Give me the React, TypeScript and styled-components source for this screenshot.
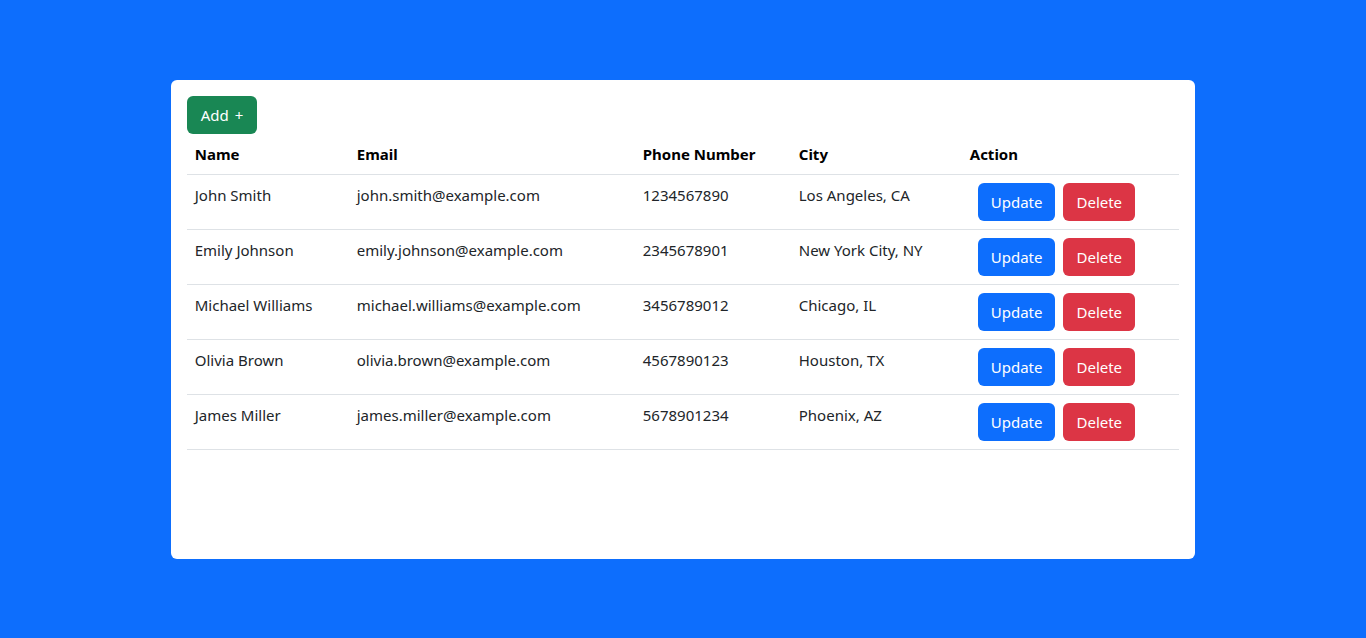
import React from "react";
import styled, { createGlobalStyle } from "styled-components";

const Global = createGlobalStyle`
  html, body { margin: 0; padding: 0; }
  body {
    font-family: "Noto Sans", "Open Sans", sans-serif;
    font-size: 15px;
    line-height: 24px;
    color: #212529;
  }
  * { box-sizing: border-box; }
`;

const Page = styled.div`
  display: flex;
  height: 100vh;
  background: #0d6efd;
  justify-content: center;
  align-items: center;
`;

const Card = styled.div`
  width: 75%;
  height: 479px;
  background: #fff;
  border-radius: 6px;
  padding: 16px;
`;

const Btn = styled.button<{ $variant: "success" | "primary" | "danger"; $ms?: boolean }>`
  font-family: inherit;
  font-size: 15px;
  line-height: 24px;
  padding: 6px 12px;
  border: 1px solid transparent;
  border-radius: 6px;
  color: #fff;
  cursor: pointer;
  margin-left: ${(p) => (p.$ms ? "8px" : "0")};
  background: ${(p) =>
    p.$variant === "success" ? "#198754" : p.$variant === "primary" ? "#0d6efd" : "#dc3545"};
`;

const AddBtn = styled(Btn)`
  padding: 6px 13px;
  word-spacing: 2px;
`;

const Table = styled.table`
  width: 100%;
  border-collapse: collapse;
  table-layout: fixed;
  vertical-align: top;
`;

const Th = styled.th<{ $w?: number }>`
  text-align: left;
  font-weight: 700;
  padding: 8px;
  border-bottom: 1px solid #dee2e6;
  width: ${(p) => (p.$w ? `${p.$w}px` : "auto")};
  color: #000;
`;

const Td = styled.td`
  padding: 8px;
  border-bottom: 1px solid #dee2e6;
  vertical-align: top;
`;

const users = [
  { name: "John Smith", email: "john.smith@example.com", phone: "1234567890", city: "Los Angeles, CA" },
  { name: "Emily Johnson", email: "emily.johnson@example.com", phone: "2345678901", city: "New York City, NY" },
  { name: "Michael Williams", email: "michael.williams@example.com", phone: "3456789012", city: "Chicago, IL" },
  { name: "Olivia Brown", email: "olivia.brown@example.com", phone: "4567890123", city: "Houston, TX" },
  { name: "James Miller", email: "james.miller@example.com", phone: "5678901234", city: "Phoenix, AZ" },
];

export default function App() {
  return (
    <>
      <Global />
      <Page>
        <Card>
          <AddBtn $variant="success">Add +</AddBtn>
          <Table>
            <thead>
              <tr>
                <Th $w={162}>Name</Th>
                <Th $w={286}>Email</Th>
                <Th $w={156}>Phone Number</Th>
                <Th $w={171}>City</Th>
                <Th>Action</Th>
              </tr>
            </thead>
            <tbody>
              {users.map((u) => (
                <tr key={u.email}>
                  <Td>{u.name}</Td>
                  <Td>{u.email}</Td>
                  <Td>{u.phone}</Td>
                  <Td>{u.city}</Td>
                  <Td>
                    <Btn $variant="primary" $ms>Update</Btn>
                    <Btn $variant="danger" $ms>Delete</Btn>
                  </Td>
                </tr>
              ))}
            </tbody>
          </Table>
        </Card>
      </Page>
    </>
  );
}
